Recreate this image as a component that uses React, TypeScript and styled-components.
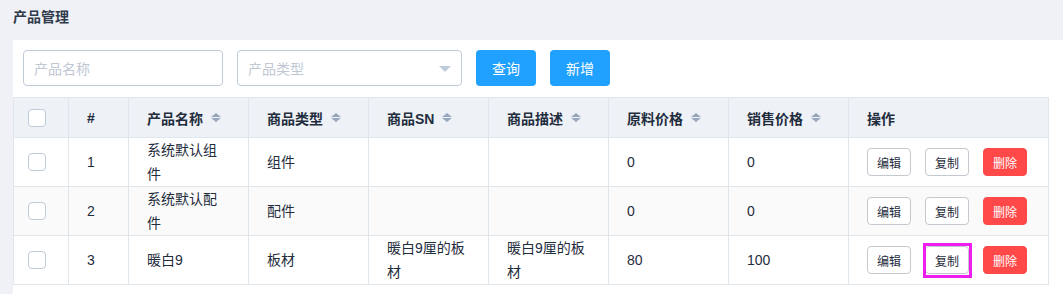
import React from "react";
import styled, { createGlobalStyle } from "styled-components";

const GlobalStyle = createGlobalStyle`
  html, body { margin: 0; padding: 0; background: #eff1f6; }
  body {
    font-family: "Liberation Sans", "Noto Sans CJK SC", sans-serif;
    color: #1f2d3d;
    font-size: 14px;
  }
  * { box-sizing: border-box; }
`;

const Page = styled.div`
  width: 1063px;
`;

const Title = styled.div`
  height: 40px;
  padding: 7px 0 0 13px;
  font-size: 14px;
  font-weight: bold;
  line-height: 20px;
  color: #2f3a4a;
`;

const Panel = styled.div`
  margin-left: 13px;
  background: #fff;
  padding-bottom: 9px;
`;

const Toolbar = styled.div`
  display: flex;
  align-items: center;
  padding: 10px 10px 11px 10px;
`;

const InputBox = styled.div<{ $w: number; $ml?: number }>`
  position: relative;
  width: ${(p) => p.$w}px;
  height: 36px;
  margin-left: ${(p) => p.$ml ?? 0}px;
  border: 1px solid #bfcbd9;
  border-radius: 4px;
  display: flex;
  align-items: center;
  padding-left: 10px;
  color: #c0c8d4;
  font-size: 14px;
`;

const Arrow = styled.span`
  position: absolute;
  right: 10px;
  top: 15px;
  width: 0;
  height: 0;
  border-left: 6px solid transparent;
  border-right: 6px solid transparent;
  border-top: 6px solid #bfcbd9;
`;

const PrimaryButton = styled.button<{ $ml: number }>`
  width: 60px;
  height: 36px;
  margin-left: ${(p) => p.$ml}px;
  background: #20a0ff;
  border: none;
  border-radius: 4px;
  color: #fff;
  font-family: inherit;
  font-size: 14px;
  padding: 0;
`;

const Table = styled.table`
  width: 1035px;
  border-collapse: collapse;
  table-layout: fixed;
  border: 1px solid #dfe6ec;
`;

const Th = styled.th<{ $w: number }>`
  width: ${(p) => p.$w}px;
  height: 40px;
  background: #eef1f6;
  border: 1px solid #dfe6ec;
  text-align: left;
  padding: 0 0 0 18px;
  font-size: 14px;
  font-weight: bold;
  color: #1f2d3d;
  white-space: nowrap;
`;

const CheckTh = styled(Th)`
  padding: 0 0 0 14px;
`;

const HeadInner = styled.div`
  display: flex;
  align-items: center;
`;

const SortCaret = styled.span`
  display: inline-flex;
  flex-direction: column;
  gap: 1px;
  margin-left: 8px;
  &::before,
  &::after {
    content: "";
    width: 0;
    height: 0;
    border-left: 5px solid transparent;
    border-right: 5px solid transparent;
  }
  &::before { border-bottom: 4.5px solid #97a8be; }
  &::after { border-top: 4.5px solid #97a8be; }
`;

const Tr = styled.tr<{ $striped?: boolean }>`
  background: ${(p) => (p.$striped ? "#fafafa" : "#fff")};
`;

const Td = styled.td`
  border: 1px solid #dfe6ec;
  padding: 0;
  vertical-align: middle;
`;

const Cell = styled.div`
  padding: 0 20px 0 18px;
  line-height: 24px;
  font-size: 14px;
  color: #1f2d3d;
  word-break: break-all;
`;

const CheckTd = styled(Td)`
  padding: 0 0 0 14px;
`;

const Checkbox = styled.span`
  display: block;
  width: 18px;
  height: 18px;
  border: 1px solid #bfcbd9;
  border-radius: 4px;
  background: #fff;
`;

const Actions = styled.div`
  display: flex;
  align-items: center;
  gap: 14px;
  padding-left: 18px;
`;

const SmallButton = styled.button<{ $danger?: boolean; $marked?: boolean }>`
  position: relative;
  height: 28px;
  width: 44px;
  padding: 0;
  border-radius: 4px;
  font-family: inherit;
  font-size: 12px;
  background: ${(p) => (p.$danger ? "#ff4949" : "#fff")};
  color: ${(p) => (p.$danger ? "#fff" : "#1f2d3d")};
  border: 1px solid ${(p) => (p.$danger ? "#ff4949" : "#c4c9d0")};
  ${(p) =>
    p.$marked
      ? `&::after {
    content: "";
    position: absolute;
    left: -3px;
    right: -4px;
    top: -4px;
    bottom: -5px;
    border: 3px solid #ee1fee;
  }`
      : ""}
`;

const rows = [
  { id: 1, name: "系统默认组件", type: "组件", sn: "", desc: "", cost: "0", price: "0" },
  { id: 2, name: "系统默认配件", type: "配件", sn: "", desc: "", cost: "0", price: "0" },
  { id: 3, name: "暖白9", type: "板材", sn: "暖白9厘的板材", desc: "暖白9厘的板材", cost: "80", price: "100" },
];

const sortCols = ["产品名称", "商品类型", "商品SN", "商品描述", "原料价格", "销售价格"];

export default function App() {
  return (
    <Page>
      <GlobalStyle />
      <Title>产品管理</Title>
      <Panel>
        <Toolbar>
          <InputBox $w={200}>产品名称</InputBox>
          <InputBox $w={225} $ml={14}>
            产品类型
            <Arrow />
          </InputBox>
          <PrimaryButton $ml={14}>查询</PrimaryButton>
          <PrimaryButton $ml={14}>新增</PrimaryButton>
        </Toolbar>
        <Table>
          <thead>
            <tr>
              <CheckTh $w={55}>
                <Checkbox />
              </CheckTh>
              <Th $w={60}>#</Th>
              {sortCols.map((c) => (
                <Th $w={120} key={c}>
                  <HeadInner>
                    {c}
                    <SortCaret />
                  </HeadInner>
                </Th>
              ))}
              <Th $w={200}>操作</Th>
            </tr>
          </thead>
          <tbody>
            {rows.map((r, i) => (
              <Tr key={r.id} $striped={i === 1}>
                <CheckTd>
                  <Checkbox />
                </CheckTd>
                <Td><Cell>{r.id}</Cell></Td>
                <Td><Cell>{r.name}</Cell></Td>
                <Td><Cell>{r.type}</Cell></Td>
                <Td><Cell>{r.sn}</Cell></Td>
                <Td><Cell>{r.desc}</Cell></Td>
                <Td><Cell>{r.cost}</Cell></Td>
                <Td><Cell>{r.price}</Cell></Td>
                <Td>
                  <Actions>
                    <SmallButton>编辑</SmallButton>
                    <SmallButton $marked={i === 2}>复制</SmallButton>
                    <SmallButton $danger>删除</SmallButton>
                  </Actions>
                </Td>
              </Tr>
            ))}
          </tbody>
        </Table>
      </Panel>
    </Page>
  );
}
